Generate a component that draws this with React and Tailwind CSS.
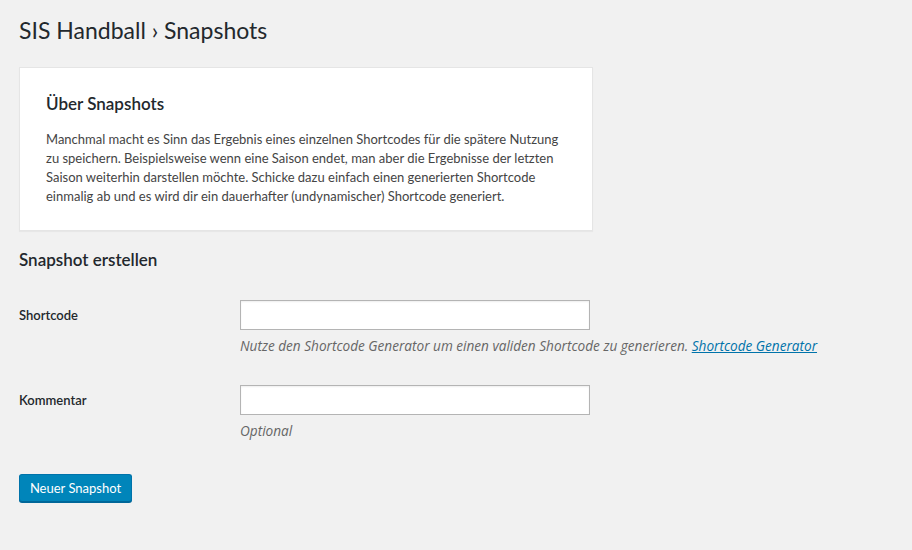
export default function App() {
  return (
    <div className="min-h-[550px] bg-[#f1f1f1] px-[19px] pt-[15px] pb-10 text-[13px] text-[#444] font-['Lato','Open_Sans',sans-serif]">
      <h1 className="text-[23px] leading-[30px] font-normal text-[#23282d]">SIS Handball › Snapshots</h1>

      <div className="mt-[22px] w-[574px] bg-white border border-[#e5e5e5] shadow-[0_1px_1px_rgba(0,0,0,0.04)] px-[26px] pt-[9px] pb-[24px]">
        <h2 className="mt-[17px] text-[17px] leading-[20px] font-semibold text-[#23282d]">Über Snapshots</h2>
        <p className="mt-[16px] leading-[19px]">
          Manchmal macht es Sinn das Ergebnis eines einzelnen Shortcodes für die spätere Nutzung zu speichern. Beispielsweise wenn eine Saison endet, man aber die Ergebnisse der letzten Saison weiterhin darstellen möchte. Schicke dazu einfach einen generierten Shortcode einmalig ab und es wird dir ein dauerhafter (undynamischer) Shortcode generiert.
        </p>
      </div>

      <h2 className="mt-[19px] text-[17px] leading-[20px] font-semibold text-[#23282d]">Snapshot erstellen</h2>

      <div className="mt-[30px] flex">
        <label className="w-[221px] shrink-0 leading-[30px] font-semibold text-[#23282d]">Shortcode</label>
        <div>
          <input type="text" className="block w-[350px] h-[30px] bg-white border border-[#b4b4b4] shadow-[inset_0_1px_2px_rgba(0,0,0,0.07)] px-2 outline-none" />
          <p className="mt-[6px] text-[13.6px] leading-[19px] italic text-[#666] font-['Open_Sans',sans-serif]">
            Nutze den Shortcode Generator um einen validen Shortcode zu generieren.{' '}
            <a href="#" className="text-[#0073aa] underline">Shortcode Generator</a>
          </p>
        </div>
      </div>

      <div className="mt-[30px] flex">
        <label className="w-[221px] shrink-0 leading-[30px] font-semibold text-[#23282d]">Kommentar</label>
        <div>
          <input type="text" className="block w-[350px] h-[30px] bg-white border border-[#b4b4b4] shadow-[inset_0_1px_2px_rgba(0,0,0,0.07)] px-2 outline-none" />
          <p className="mt-[6px] text-[13.6px] leading-[19px] italic text-[#666] font-['Open_Sans',sans-serif]">Optional</p>
        </div>
      </div>

      <button className="mt-[34px] h-[28px] w-[113px] rounded-[3px] bg-[#0085ba] border border-[#0073aa] border-b-[#006799] shadow-[0_1px_0_#006799] text-white text-[13px] leading-[26px]">
        Neuer Snapshot
      </button>
    </div>
  );
}
